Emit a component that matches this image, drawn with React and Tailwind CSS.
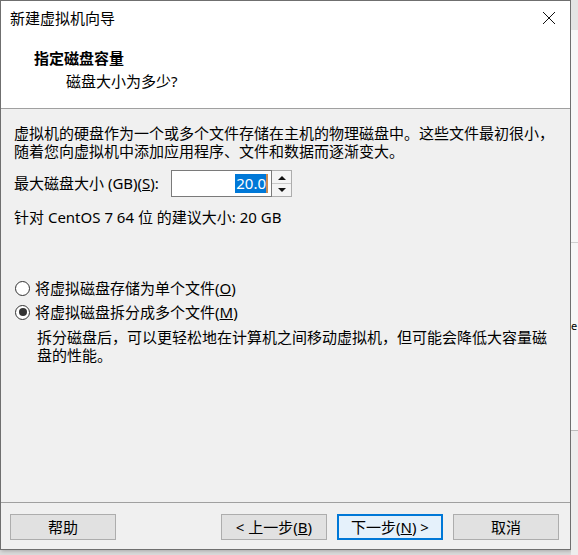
import React from "react";

const font = "font-['Noto_Sans','Noto_Sans_CJK_SC',sans-serif]";

const Radio = ({ checked, children }) => (
  <div className="flex items-center h-[20px]">
    <span className="w-[15px] h-[15px] ml-[14px] rounded-full border border-[#333] bg-white flex items-center justify-center">
      {checked && <span className="w-[8px] h-[8px] rounded-full bg-[#333]" />}
    </span>
    <span className="ml-[5px]">{children}</span>
  </div>
);

const Button = ({ children, primary }) => (
  <button
    className={
      primary
        ? "w-[106px] h-[26px] bg-[#e5f1fb] border-2 border-[#0078d7] text-[15px] leading-none"
        : "w-[106px] h-[26px] bg-[#e1e1e1] border border-[#adadad] text-[15px] leading-none"
    }
  >
    {children}
  </button>
);

export default function App() {
  return (
    <div className={`flex w-[578px] h-[555px] bg-[#dcdcdc] text-black text-[15px] ${font}`}>
      {/* dialog window */}
      <div className="w-[571px] h-[550px] flex flex-col bg-[#f0f0f0] border border-[#6f6f6f] shadow-[1px_1px_4px_rgba(0,0,0,0.25)]">
        {/* title + header (white) */}
        <div className="bg-white border-b border-[#a0a0a0] h-[108px] flex flex-col">
          <div className="h-[30px] flex items-center justify-between">
            <span className="pl-[9px] text-[15px] leading-[20px] pt-[4px]">新建虚拟机向导</span>
            <span className="w-[42px] h-[30px] flex items-center justify-center pt-[4px]">
              <svg width="14" height="14" viewBox="0 0 14 14">
                <path d="M1 1L13 13M13 1L1 13" stroke="#111" strokeWidth="1" fill="none" />
              </svg>
            </span>
          </div>
          <div className="pl-[33px] pt-[17px] font-bold leading-[20px]">指定磁盘容量</div>
          <div className="pl-[65px] mt-[3px] leading-[20px]">磁盘大小为多少?</div>
        </div>

        {/* body */}
        <div className="flex-1 flex flex-col">
          <div className="pl-[13px] pt-[15px] leading-[18px]">
            <div>虚拟机的硬盘作为一个或多个文件存储在主机的物理磁盘中。这些文件最初很小，</div>
            <div>随着您向虚拟机中添加应用程序、文件和数据而逐渐变大。</div>
          </div>

          <div className="flex items-center h-[27px] mt-[10px] pl-[13px]">
            <span className="w-[157px]">
              最大磁盘大小 (GB)(<span className="underline">S</span>):
            </span>
            <div className="flex h-[27px]">
              <div className="w-[101px] h-[27px] bg-white border border-[#7a7a7a] flex items-center justify-end pr-[3px]">
                <span className="bg-[#0078d7] text-white leading-[19px] pl-[1px]">20.0</span>
                <span className="w-[2px] h-[19px] bg-[#c98a52]" />
              </div>
              <div className="w-[20px] h-[27px] flex flex-col border border-l-0 border-[#adadad] bg-[#f4f4f4]">
                <div className="flex-1 flex items-center justify-center border-b border-[#c8c8c8]">
                  <svg width="8" height="5" viewBox="0 0 8 5">
                    <path d="M0 5L4 1L8 5Z" fill="#111" />
                  </svg>
                </div>
                <div className="flex-1 flex items-center justify-center">
                  <svg width="8" height="5" viewBox="0 0 8 5">
                    <path d="M0 0L4 4L8 0Z" fill="#111" />
                  </svg>
                </div>
              </div>
            </div>
          </div>

          <div className="pl-[13px] mt-[11px] leading-[18px]">针对 CentOS 7 64 位 的建议大小: 20 GB</div>

          <div className="mt-[52px]">
            <Radio>
              将虚拟磁盘存储为单个文件(<span className="underline">O</span>)
            </Radio>
          </div>
          <div className="mt-[4px]">
            <Radio checked>
              将虚拟磁盘拆分成多个文件(<span className="underline">M</span>)
            </Radio>
          </div>
          <div className="pl-[36px] mt-[6px] leading-[18px]">
            <div>拆分磁盘后，可以更轻松地在计算机之间移动虚拟机，但可能会降低大容量磁</div>
            <div>盘的性能。</div>
          </div>
        </div>

        {/* footer */}
        <div className="h-[47px] border-t border-[#a0a0a0] flex items-start pt-[11px] pl-[9px] pr-[11px]">
          <Button>帮助</Button>
          <div className="flex-1" />
          <div className="flex gap-[10px]">
            <Button>
              &lt; 上一步(<span className="underline">B</span>)
            </Button>
            <Button primary>
              下一步(<span className="underline">N</span>) &gt;
            </Button>
            <Button>取消</Button>
          </div>
        </div>
      </div>

      {/* background window strip */}
      <div className="flex-1 flex flex-col overflow-hidden">
        <div className="h-[30px] bg-[#e4e4e4]" />
        <div className="h-[213px] bg-[#f7f7f7] border-b border-[#d0d0d0]" />
        <div className="h-[76px] bg-[#f7f7f7]" />
        <div className="h-[14px] bg-[#f7f7f7] text-[11px] leading-[14px]">e</div>
        <div className="h-[98px] bg-[#f7f7f7] border-b border-[#bcbcbc]" />
        <div className="flex-1 bg-[#ededed]" />
      </div>
    </div>
  );
}
